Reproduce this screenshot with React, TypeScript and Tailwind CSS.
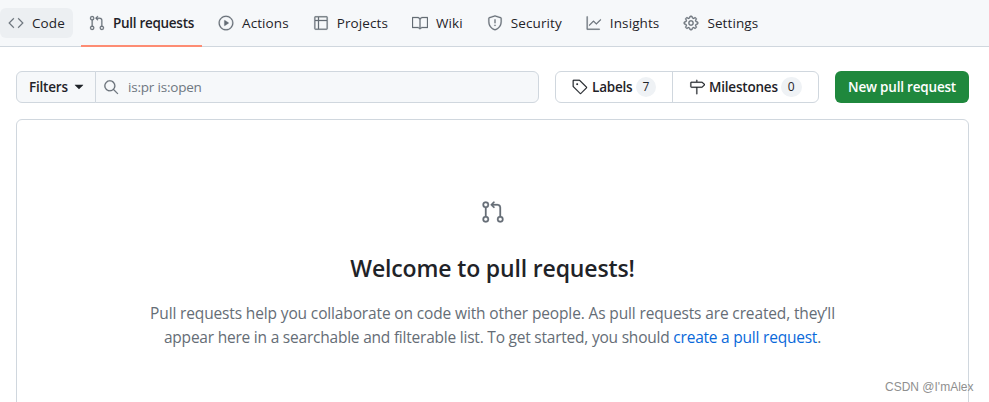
import { GoBook, GoCode, GoGear, GoGitPullRequest, GoGraph, GoMilestone, GoPlay, GoSearch, GoShield, GoTable, GoTag, GoTriangleDown } from "react-icons/go";
import type { IconType } from "react-icons";

interface Tab {
  label: string;
  icon: IconType;
  active?: boolean;
  hover?: boolean;
}

const tabs: Tab[] = [
  { label: "Code", icon: GoCode, hover: true },
  { label: "Pull requests", icon: GoGitPullRequest, active: true },
  { label: "Actions", icon: GoPlay },
  { label: "Projects", icon: GoTable },
  { label: "Wiki", icon: GoBook },
  { label: "Security", icon: GoShield },
  { label: "Insights", icon: GoGraph },
  { label: "Settings", icon: GoGear },
];

export default function App() {
  return (
    <div className="relative h-[402px] w-[989px] overflow-hidden bg-white text-[13.5px] tracking-[-0.2px] text-[#1f2328] font-['Open_Sans','Noto_Sans',sans-serif]">
      {/* Repo tabs */}
      <nav className="flex h-[47px] gap-2 border-b border-[#d0d7de] bg-[#f6f8fa] pt-2">
        {tabs.map((t) => (
          <div key={t.label} className="relative h-[30px]">
            <div className={`flex h-[30px] items-center gap-2 rounded-md px-2 ${t.hover ? "bg-[#eceff2]" : ""}`}>
              <t.icon className="h-4 w-4 shrink-0 stroke-current stroke-[0.4] text-[#656d76]" />
              <span className={t.active ? "font-semibold tracking-[-0.28px]" : "tracking-[0.1px]"}>{t.label}</span>
            </div>
            {t.active && <div className="absolute bottom-[-9px] left-0 right-0 h-[2px] bg-[#fd8c73]" />}
          </div>
        ))}
      </nav>

      <div className="pl-4 pr-5 pt-6">
        {/* Filter bar */}
        <div className="flex h-8 items-stretch">
          <div className="flex w-[80px] shrink-0 items-center gap-[3px] rounded-l-md border border-[#d0d7de] bg-[#f6f8fa] pl-3 font-semibold">
            Filters
            <GoTriangleDown className="h-4 w-4" />
          </div>
          <div className="ml-[-1px] flex w-[444px] items-center gap-[9px] rounded-r-md border border-[#d0d7de] bg-[#f6f8fa] pl-[7px]">
            <GoSearch className="h-4 w-4 stroke-current stroke-[0.4] text-[#656d76]" />
            <span className="text-[#6e7781]">is:pr is:open</span>
          </div>
          <div className="ml-4 flex w-[264px] rounded-md border border-[#d0d7de] font-semibold">
            <div className="flex w-[117px] items-center gap-[3px] border-r border-[#d0d7de] pl-4">
              <GoTag className="h-4 w-4 stroke-current stroke-[0.3]" />
              <span className="ml-px">Labels</span>
              <span className="rounded-full bg-[#eff2f5] px-[7px] text-[12px] font-medium leading-[20px]">7</span>
            </div>
            <div className="flex flex-1 items-center gap-[3px] pl-4">
              <GoMilestone className="h-4 w-4 stroke-current stroke-[0.3]" />
              <span className="ml-px">Milestones</span>
              <span className="rounded-full bg-[#eff2f5] px-[7px] text-[12px] font-medium leading-[20px]">0</span>
            </div>
          </div>
          <button className="ml-4 w-[134px] rounded-md bg-[#1f883d] font-semibold text-white">
            New pull request
          </button>
        </div>

        {/* Blankslate */}
        <div className="mt-4 flex h-[320px] flex-col items-center rounded-md border border-[#d0d7de] pt-20">
          <GoGitPullRequest className="h-6 w-6 stroke-current stroke-[0.3] text-[#656d76]" />
          <h2 className="mt-[29px] text-[23px] font-semibold leading-[30px] tracking-[-0.15px]">Welcome to pull requests!</h2>
          <p className="mt-[18px] w-[720px] text-center text-[15.5px] leading-6 tracking-[-0.14px] text-[#656d76]">
            Pull requests help you collaborate on code with other people. As pull requests are created, they’ll
            <br />
            <span className="tracking-[-0.22px]">
              appear here in a searchable and filterable list. To get started, you should{" "}
              <span className="text-[#0969da]">create a pull request</span>.
            </span>
          </p>
        </div>
      </div>

      <span className="absolute left-[885px] top-[380px] font-['Liberation_Sans',sans-serif] text-[12px] leading-[14px] tracking-normal text-[#8f8f8f]">
        CSDN @I'mAlex
      </span>
    </div>
  );
}
